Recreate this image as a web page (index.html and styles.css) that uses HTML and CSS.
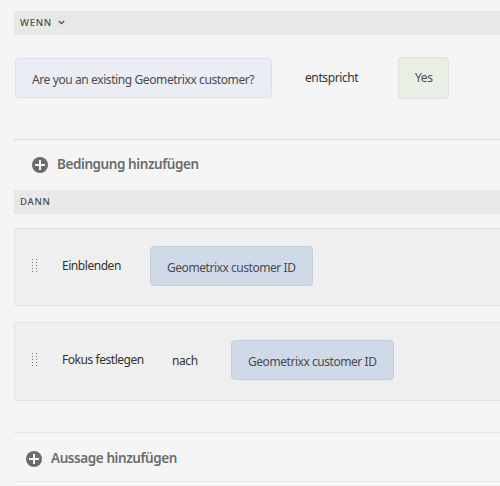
FILE: index.html
```html
<!DOCTYPE html>
<html lang="de">
<head>
<meta charset="utf-8">
<title>Regel-Editor</title>
<link rel="stylesheet" href="styles.css">
</head>
<body>
<main class="editor">
  <header class="section-bar"><span class="when">WENN</span>
    <svg class="chevron" width="7" height="5" viewBox="0 0 7 5"><path d="M.8 1 3.5 3.6 6.2 1"/></svg>
  </header>
  <section class="condition">
    <div class="chip question"><span class="question-text">Are you an existing Geometrixx customer?</span></div>
    <span class="operator">entspricht</span>
    <div class="chip answer"><span class="yes">Yes</span></div>
  </section>
  <div class="add add-condition">
    <svg class="plus" width="16" height="16" viewBox="0 0 16 16"><circle cx="8" cy="8" r="8"/><path d="M8 3v10M3 8h10"/></svg>
    <span class="add-condition-text">Bedingung hinzufügen</span>
  </div>
  <header class="section-bar"><span class="then">DANN</span></header>
  <section class="statement">
    <svg class="grip" width="5" height="14" viewBox="0 0 5 14"><path d="M.5 0v14M4.5 0v14"/></svg>
    <span class="action show">Einblenden</span>
    <div class="chip object"><span class="object-text">Geometrixx customer ID</span></div>
  </section>
  <section class="statement focus">
    <svg class="grip" width="5" height="14" viewBox="0 0 5 14"><path d="M.5 0v14M4.5 0v14"/></svg>
    <span class="action set-focus">Fokus festlegen</span>
    <span class="to">nach</span>
    <div class="chip object"><span class="object-text">Geometrixx customer ID</span></div>
  </section>
  <div class="add add-statement">
    <svg class="plus" width="16" height="16" viewBox="0 0 16 16"><circle cx="8" cy="8" r="8"/><path d="M8 3v10M3 8h10"/></svg>
    <span class="add-statement-text">Aussage hinzufügen</span>
  </div>
</main>
</body>
</html>
```
FILE: styles.css
```css
* { box-sizing: border-box; }
body {
  margin: 0;
  background: #f5f5f5;
  color: #323232;
  font: 12px/18px "Noto Sans", "Open Sans", sans-serif;
  overflow: hidden;
}
.editor { height: 486px; padding: 11px 0 0 14px; overflow: hidden; }
span { white-space: nowrap; }
.section-bar {
  display: flex;
  align-items: center;
  height: 24px;
  padding-left: 6px;
  background: #e8e8e8;
  color: #4b4b4b;
  font-size: 9.5px;
  font-weight: 500;
  letter-spacing: .7px;
}
.section-bar span { margin-top: -1px; }
.chevron { margin: -1px 0 0 6px; fill: none; stroke: #4b4b4b; stroke-width: 1.3; }
.condition {
  display: flex;
  align-items: center;
  height: 105px;
  padding: 0 0 19px 1px;
  border-bottom: 1px solid #d8d8d8;
}
.chip {
  display: flex;
  flex: none;
  align-items: center;
  height: 40px;
  border: 1px solid;
  border-radius: 4px;
  color: #4b4b4b;
}
.question { width: 257px; padding: 4px 0 0 16px; background: #eaedf3; border-color: #dbe0e7; }
.operator { width: 93px; margin-left: 33px; }
.answer { width: 51px; height: 42px; padding-left: 16px; background: #e9efe4; border-color: #dde1d7; }
.add { display: flex; align-items: center; color: #6b6b6b; font-size: 13.5px; font-weight: 600; letter-spacing: -.42px; }
.plus { flex: none; fill: #6b6b6b; stroke: #f5f5f5; stroke-width: 2; }
.plus circle { stroke: none; }
.add-condition { height: 50px; padding-left: 18px; }
.add-condition span, .add-statement span { margin: -2px 0 0 9px; }
.statement {
  display: flex;
  align-items: center;
  height: 78px;
  margin-top: 14px;
  padding: 0 0 2px 17px;
  background: #efefef;
  border: 1px solid #e2e2e2;
  border-right: 0;
  border-radius: 4px 0 0 4px;
}
.focus { height: 79px; margin-top: 16px; padding-bottom: 3px; }
.grip { flex: none; stroke: #777; stroke-dasharray: 1 2; }
.action { margin-left: 25px; }
.show { width: 88px; }
.set-focus { width: 110px; }
.to { width: 59px; margin-top: 2px; }
.object { width: 163px; padding: 3px 0 0 16px; background: #d0d9e8; border-color: #c3cedf; }
.add-statement { height: 50px; margin-top: 31px; padding: 3px 0 0 12px; border: solid #e5e5e5; border-width: 1px 0; }
.question-text, .object-text, .operator, .yes, .action, .to { letter-spacing: -.4px; }
.action, .object-text { letter-spacing: -.45px; }
```
